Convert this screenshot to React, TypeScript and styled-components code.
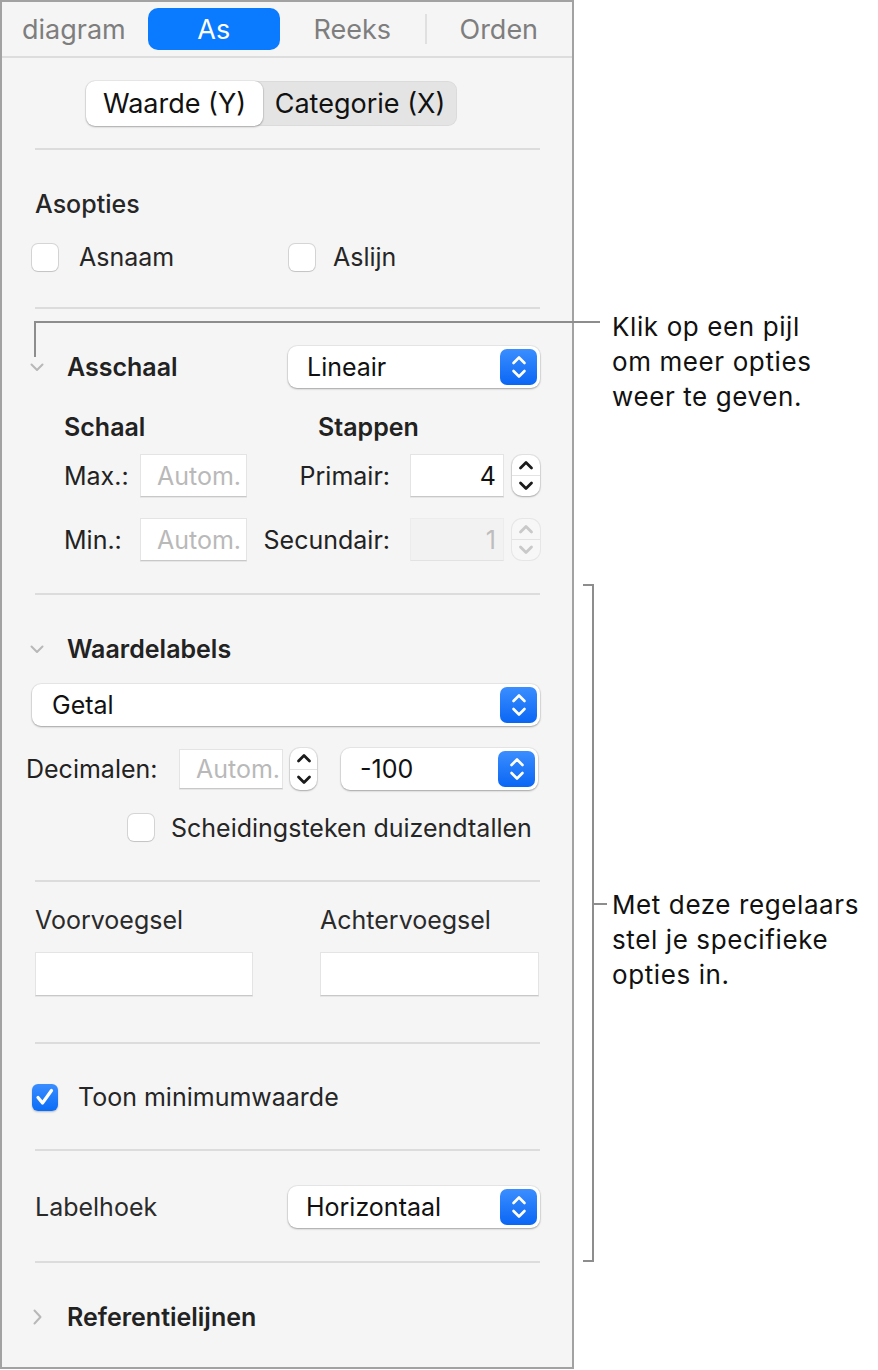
import React from "react";
import styled, { createGlobalStyle, css } from "styled-components";

const GlobalStyle = createGlobalStyle`
  html, body { margin: 0; padding: 0; background: #ffffff; }
  body { font-family: Inter, "Noto Sans", "Liberation Sans", sans-serif; color: #242424; -webkit-font-smoothing: antialiased; }
  * { box-sizing: border-box; }
`;

const Page = styled.div`
  position: relative;
  width: 878px;
  height: 1370px;
  background: #ffffff;
`;

const Panel = styled.div`
  width: 574px;
  height: 1369px;
  border: 2px solid #a2a2a2;
  background: #f5f5f5;
  display: flex;
  flex-direction: column;
  overflow: hidden;
`;

const TabBar = styled.div`
  height: 56px;
  flex: none;
  border-bottom: 2px solid #dddddd;
  display: flex;
  align-items: center;
  padding-left: 20px;
`;

const Tab = styled.div<{ $width?: number; $active?: boolean }>`
  font-size: 27px;
  color: #7e7e7e;
  display: flex;
  align-items: center;
  justify-content: center;
  height: 42px;
  ${(p) => (p.$width ? `width: ${p.$width}px;` : "")}
  ${(p) =>
    p.$active &&
    css`
      background: #0a7aff;
      color: #ffffff;
      border-radius: 10px;
      margin-left: 22px;
    `}
`;

const TabDivider = styled.div`
  width: 2px;
  height: 30px;
  background: #e0e0e0;
`;

const Section = styled.div<{ $pt: number; $pb: number }>`
  padding: ${(p) => p.$pt}px 32px ${(p) => p.$pb}px 33px;
  display: flex;
  flex-direction: column;
  flex: none;
`;

const Divider = styled.div`
  height: 2px;
  flex: none;
  margin: 0 32px 0 33px;
  background: #dcdcdc;
`;

const Segmented = styled.div`
  display: flex;
  margin-left: 51px;
  width: 371px;
  height: 45px;
  background: #e4e4e4;
  border-radius: 9px;
  box-shadow: inset 0 0 0 1px rgba(0, 0, 0, 0.04);
`;

const Segment = styled.div<{ $selected?: boolean; $width: number }>`
  width: ${(p) => p.$width}px;
  display: flex;
  align-items: center;
  justify-content: center;
  font-size: 27px;
  color: #111;
  border-radius: 9px;
  ${(p) =>
    p.$selected &&
    css`
      background: #ffffff;
      box-shadow: 0 1px 2px rgba(0, 0, 0, 0.28), 0 0 0 1px rgba(0, 0, 0, 0.05);
    `}
`;

const Heading = styled.div<{ $weight?: number; $mt?: number }>`
  height: 30px;
  display: flex;
  align-items: center;
  font-size: 25px;
  font-weight: ${(p) => p.$weight ?? 500};
  color: #262626;
  margin-top: ${(p) => p.$mt ?? 0}px;
`;

const Row = styled.div<{ $mt?: number; $height: number; $ml?: number }>`
  display: flex;
  align-items: center;
  height: ${(p) => p.$height}px;
  margin-top: ${(p) => p.$mt ?? 0}px;
  margin-left: ${(p) => p.$ml ?? 0}px;
`;

const CheckItem = styled.div<{ $width?: number }>`
  display: flex;
  align-items: center;
  ${(p) => (p.$width ? `width: ${p.$width}px;` : "")}
`;

const Box = styled.div<{ $checked?: boolean }>`
  width: 26px;
  height: 27px;
  flex: none;
  border-radius: 6px;
  display: flex;
  align-items: center;
  justify-content: center;
  ${(p) =>
    p.$checked
      ? css`
          background: linear-gradient(#3a8dff, #0a6cf6);
          box-shadow: 0 1px 2px rgba(0, 0, 0, 0.25);
        `
      : css`
          background: #ffffff;
          box-shadow: 0 0 0 1px rgba(0, 0, 0, 0.13), 0 1px 1px rgba(0, 0, 0, 0.08);
        `}
`;

const CheckLabel = styled.span<{ $gap: number }>`
  font-size: 25px;
  color: #262626;
  margin-left: ${(p) => p.$gap}px;
`;

const Disclosure = styled.div`
  display: flex;
  align-items: center;
  height: 30px;
  margin-left: -5px;
`;

const DisclosureIcon = styled.span`
  width: 14px;
  display: flex;
  justify-content: center;
`;

const DisclosureText = styled.span`
  margin-left: 23px;
  font-size: 25px;
  font-weight: 600;
  color: #222;
`;

const Popup = styled.div<{ $width: number; $ml?: string }>`
  width: ${(p) => p.$width}px;
  height: 42px;
  margin-left: ${(p) => p.$ml ?? "0"};
  background: #ffffff;
  border-radius: 9px;
  box-shadow: 0 0 0 1px rgba(0, 0, 0, 0.05), 0 1px 2px rgba(0, 0, 0, 0.3);
  display: flex;
  align-items: center;
  justify-content: space-between;
  padding: 0 3px 0 19px;
  flex: none;
`;

const PopupText = styled.span`
  font-size: 25px;
  color: #111;
`;

const PopupArrows = styled.span`
  width: 37px;
  height: 36px;
  border-radius: 7px;
  background: linear-gradient(#3b8eff, #0a66f4);
  display: flex;
  align-items: center;
  justify-content: center;
`;

const ColumnHeads = styled.div`
  display: flex;
  height: 30px;
  align-items: center;
  margin-top: 24px;
  margin-left: 29px;
`;

const ColumnHead = styled.span<{ $width?: number }>`
  font-size: 25px;
  font-weight: 600;
  color: #222;
  ${(p) => (p.$width ? `width: ${p.$width}px;` : "")}
`;

const FieldGrid = styled.div<{ $mt: number }>`
  display: grid;
  grid-template-columns: 76px 107px 163px 94px 36px;
  align-items: center;
  height: 43px;
  margin-top: ${(p) => p.$mt}px;
  margin-left: 29px;
`;

const FieldLabel = styled.span<{ $right?: boolean; $pr?: number; $width?: number }>`
  font-size: 25px;
  color: #222;
  white-space: nowrap;
  ${(p) => (p.$right ? `text-align: right; padding-right: ${p.$pr ?? 20}px;` : "")}
  ${(p) => (p.$width ? `width: ${p.$width}px; flex: none;` : "")}
`;

const Field = styled.div<{ $disabled?: boolean; $align?: string; $width?: number; $height?: number }>`
  height: ${(p) => p.$height ?? 43}px;
  ${(p) => (p.$width ? `width: ${p.$width}px; flex: none;` : "")}
  background: ${(p) => (p.$disabled ? "#f2f2f2" : "#ffffff")};
  border: 1px solid ${(p) => (p.$disabled ? "#ececec" : "#e4e4e4")};
  border-bottom-color: ${(p) => (p.$disabled ? "#e2e2e2" : "#c8c8c8")};
  box-shadow: ${(p) => (p.$disabled ? "none" : "0 1px 0 rgba(0,0,0,0.06)")};
  display: flex;
  align-items: center;
  justify-content: ${(p) => p.$align ?? "flex-start"};
  padding: 0 7px 0 16px;
  font-size: 25px;
`;

const Placeholder = styled.span`
  color: #b9b9b9;
`;

const Value = styled.span<{ $disabled?: boolean }>`
  color: ${(p) => (p.$disabled ? "#bdbdbd" : "#111")};
`;

const Stepper = styled.div<{ $disabled?: boolean; $ml: number; $width: number; $height: number }>`
  width: ${(p) => p.$width}px;
  height: ${(p) => p.$height}px;
  margin-left: ${(p) => p.$ml}px;
  flex: none;
  border-radius: 10px;
  background: ${(p) => (p.$disabled ? "#f7f7f7" : "#ffffff")};
  box-shadow: ${(p) =>
    p.$disabled
      ? "0 0 0 1px rgba(0,0,0,0.06)"
      : "0 0 0 1px rgba(0,0,0,0.07), 0 1px 2px rgba(0,0,0,0.25)"};
  display: flex;
  flex-direction: column;
`;

const StepHalf = styled.div<{ $top?: boolean }>`
  flex: 1;
  display: flex;
  align-items: center;
  justify-content: center;
  ${(p) => p.$top && "border-bottom: 1px solid #e3e3e3;"}
`;

const TwoCols = styled.div<{ $mt?: number; $height: number }>`
  display: grid;
  grid-template-columns: 285px 1fr;
  align-items: center;
  height: ${(p) => p.$height}px;
  margin-top: ${(p) => p.$mt ?? 0}px;
`;

const PlainLabel = styled.span`
  font-size: 25px;
  color: #2a2a2a;
`;

const Callout = styled.div<{ $top: number }>`
  position: absolute;
  left: 612px;
  top: ${(p) => p.$top}px;
  font-size: 26px;
  letter-spacing: 0.6px;
  line-height: 35px;
  color: #111;
`;

const Line = styled.div<{ $l: number; $t: number; $w: number; $h: number }>`
  position: absolute;
  left: ${(p) => p.$l}px;
  top: ${(p) => p.$t}px;
  width: ${(p) => p.$w}px;
  height: ${(p) => p.$h}px;
  background: #8d8d8d;
`;

const ChevronDown = () => (
  <svg width="14" height="9" viewBox="0 0 14 9">
    <polyline points="1.5,1.5 7,7 12.5,1.5" fill="none" stroke="#b8b8b8" strokeWidth="2" strokeLinecap="round" strokeLinejoin="round" />
  </svg>
);

const ChevronRight = () => (
  <svg width="9" height="16" viewBox="0 0 9 16">
    <polyline points="1.5,1.5 7.5,8 1.5,14.5" fill="none" stroke="#b8b8b8" strokeWidth="2" strokeLinecap="round" strokeLinejoin="round" />
  </svg>
);

const UpDown = () => (
  <svg width="22" height="26" viewBox="0 0 22 26">
    <polyline points="5.5,9 11,3.5 16.5,9" fill="none" stroke="#fff" strokeWidth="2.6" strokeLinecap="round" strokeLinejoin="round" />
    <polyline points="5.5,17 11,22.5 16.5,17" fill="none" stroke="#fff" strokeWidth="2.6" strokeLinecap="round" strokeLinejoin="round" />
  </svg>
);

const StepChevron = ({ up, color }: { up?: boolean; color: string }) => (
  <svg width="16" height="10" viewBox="0 0 16 10">
    <polyline
      points={up ? "2.5,8 8,2.5 13.5,8" : "2.5,2 8,7.5 13.5,2"}
      fill="none"
      stroke={color}
      strokeWidth="2.8"
      strokeLinecap="round"
      strokeLinejoin="round"
    />
  </svg>
);

const Check = () => (
  <svg width="24" height="24" viewBox="0 0 24 24">
    <polyline points="5,12.5 9.5,18 18.5,5.5" fill="none" stroke="#fff" strokeWidth="3.2" strokeLinecap="round" strokeLinejoin="round" />
  </svg>
);

const StepperControl = ({ disabled, ml, width, height }: { disabled?: boolean; ml: number; width: number; height: number }) => {
  const c = disabled ? "#c9c9c9" : "#1b1b1b";
  return (
    <Stepper $disabled={disabled} $ml={ml} $width={width} $height={height}>
      <StepHalf $top>
        <StepChevron up color={c} />
      </StepHalf>
      <StepHalf>
        <StepChevron color={c} />
      </StepHalf>
    </Stepper>
  );
};

const PopupButton = ({ text, width, ml, pl }: { text: string; width: number; ml?: string; pl?: number }) => (
  <Popup $width={width} $ml={ml} style={pl !== undefined ? { paddingLeft: pl } : undefined}>
    <PopupText>{text}</PopupText>
    <PopupArrows>
      <UpDown />
    </PopupArrows>
  </Popup>
);

export default function App() {
  return (
    <Page>
      <GlobalStyle />
      <Panel>
        <TabBar>
          <Tab>diagram</Tab>
          <Tab $active $width={132}>As</Tab>
          <Tab $width={145}>Reeks</Tab>
          <TabDivider />
          <Tab $width={144}>Orden</Tab>
        </TabBar>

        <Section $pt={23} $pb={22}>
          <Segmented>
            <Segment $selected $width={177}>Waarde (Y)</Segment>
            <Segment $width={194}>Categorie (X)</Segment>
          </Segmented>
        </Section>
        <Divider />

        <Section $pt={39} $pb={37}>
          <Heading $weight={500}>Asopties</Heading>
          <Row $mt={25} $height={26} $ml={-3}>
            <CheckItem $width={257}>
              <Box />
              <CheckLabel $gap={21}>Asnaam</CheckLabel>
            </CheckItem>
            <CheckItem>
              <Box />
              <CheckLabel $gap={18}>Aslijn</CheckLabel>
            </CheckItem>
          </Row>
        </Section>
        <Divider />

        <Section $pt={37} $pb={32}>
          <Row $height={42}>
            <Disclosure>
              <DisclosureIcon>
                <ChevronDown />
              </DisclosureIcon>
              <DisclosureText>Asschaal</DisclosureText>
            </Disclosure>
            <PopupButton text="Lineair" width={252} ml="auto" />
          </Row>
          <ColumnHeads>
            <ColumnHead $width={254}>Schaal</ColumnHead>
            <ColumnHead>Stappen</ColumnHead>
          </ColumnHeads>
          <FieldGrid $mt={12}>
            <FieldLabel>Max.:</FieldLabel>
            <Field>
              <Placeholder>Autom.</Placeholder>
            </Field>
            <FieldLabel $right>Primair:</FieldLabel>
            <Field $align="flex-end">
              <Value>4</Value>
            </Field>
            <StepperControl ml={8} width={28} height={41} />
          </FieldGrid>
          <FieldGrid $mt={21}>
            <FieldLabel>Min.:</FieldLabel>
            <Field>
              <Placeholder>Autom.</Placeholder>
            </Field>
            <FieldLabel $right>Secundair:</FieldLabel>
            <Field $disabled $align="flex-end">
              <Value $disabled>1</Value>
            </Field>
            <StepperControl disabled ml={8} width={28} height={41} />
          </FieldGrid>
        </Section>
        <Divider />

        <Section $pt={39} $pb={39}>
          <Disclosure>
            <DisclosureIcon>
              <ChevronDown />
            </DisclosureIcon>
            <DisclosureText>Waardelabels</DisclosureText>
          </Disclosure>
          <Row $mt={20} $height={41} $ml={-3}>
            <PopupButton text="Getal" width={508} pl={20} />
          </Row>
          <Row $mt={23} $height={42} $ml={-9}>
            <FieldLabel $width={153}>Decimalen:</FieldLabel>
            <Field $width={104} $height={40}>
              <Placeholder>Autom.</Placeholder>
            </Field>
            <StepperControl ml={7} width={27} height={42} />
            <Popup $width={197} $ml="24px">
              <PopupText>-100</PopupText>
              <PopupArrows>
                <UpDown />
              </PopupArrows>
            </Popup>
          </Row>
          <Row $mt={24} $height={27} $ml={93}>
            <CheckItem>
              <Box />
              <CheckLabel $gap={17}>Scheidingsteken duizendtallen</CheckLabel>
            </CheckItem>
          </Row>
        </Section>
        <Divider />

        <Section $pt={23} $pb={46}>
          <TwoCols $height={30}>
            <PlainLabel>Voorvoegsel</PlainLabel>
            <PlainLabel>Achtervoegsel</PlainLabel>
          </TwoCols>
          <TwoCols $mt={17} $height={44}>
            <Field $width={218} $height={44} />
            <Field $width={219} $height={44} />
          </TwoCols>
        </Section>
        <Divider />

        <Section $pt={39} $pb={38}>
          <Row $height={28} $ml={-3}>
            <CheckItem>
              <Box $checked>
                <Check />
              </Box>
              <CheckLabel $gap={20}>Toon minimumwaarde</CheckLabel>
            </CheckItem>
          </Row>
        </Section>
        <Divider />

        <Section $pt={35} $pb={33}>
          <Row $height={42}>
            <PlainLabel>Labelhoek</PlainLabel>
            <PopupButton text="Horizontaal" width={252} ml="auto" pl={18} />
          </Row>
        </Section>
        <Divider />

        <Section $pt={39} $pb={0}>
          <Disclosure>
            <DisclosureIcon>
              <ChevronRight />
            </DisclosureIcon>
            <DisclosureText>Referentielijnen</DisclosureText>
          </Disclosure>
        </Section>
      </Panel>

      <Line $l={34} $t={321} $w={566} $h={2} />
      <Line $l={34} $t={321} $w={2} $h={36} />
      <Callout $top={309}>
        Klik op een pijl
        <br />
        om meer opties
        <br />
        weer te geven.
      </Callout>

      <Line $l={592} $t={584} $w={2} $h={678} />
      <Line $l={583} $t={584} $w={11} $h={2} />
      <Line $l={583} $t={1260} $w={11} $h={2} />
      <Line $l={594} $t={903} $w={13} $h={2} />
      <Callout $top={887}>
        Met deze regelaars
        <br />
        stel je specifieke
        <br />
        opties in.
      </Callout>
    </Page>
  );
}
